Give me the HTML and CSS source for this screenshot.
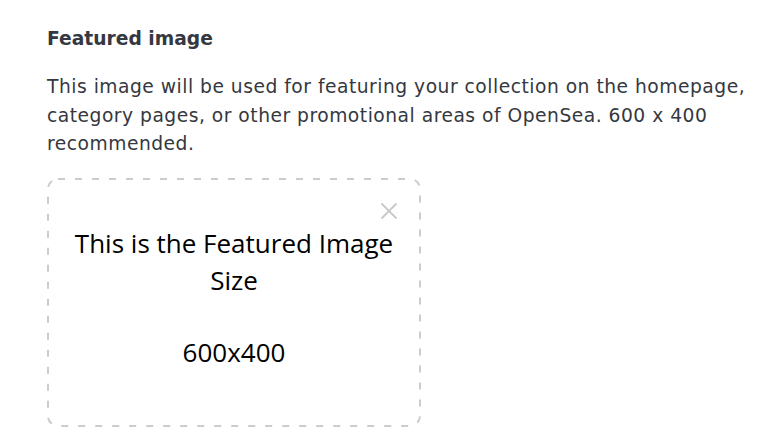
FILE: index.html
```html
<!DOCTYPE html>
<html>
<head>
<meta charset="utf-8">
<link rel="stylesheet" href="styles.css">
</head>
<body>
<section class="field">
  <h3 class="label">Featured image</h3>
  <p class="desc">This image will be used for featuring your collection on the homepage, category pages, or other promotional areas of OpenSea. 600 x 400 recommended.</p>
  <div class="drop">
    <svg class="dash" width="374" height="249" viewBox="0 0 374 249" aria-hidden="true"><rect x="1" y="1" width="372" height="247" rx="10" ry="10" fill="none" stroke="#cccccc" stroke-width="2" stroke-dasharray="7 10"/></svg>
    <div class="preview">
      <p class="line">This is the Featured Image</p>
      <p class="line">Size</p>
      <p class="line gap">600x400</p>
    </div>
    <button class="close" aria-label="Remove">
      <svg width="20" height="20" viewBox="0 0 20 20"><path d="M2.5 2.5 L17.5 17.5 M17.5 2.5 L2.5 17.5" stroke="#c8c8c8" stroke-width="1.8" fill="none"/></svg>
    </button>
  </div>
</section>
</body>
</html>
```
FILE: styles.css
```css
html, body { margin: 0; padding: 0; background: #fff; }
body { font-family: "DejaVu Sans", sans-serif; color: #353840; }
.field { padding: 27px 0 0 47px; }
.label { margin: 0; font-size: 18.7px; font-weight: 600; line-height: 24px; }
.desc { margin: 22px 0 0; font-size: 18.7px; line-height: 28.6px; font-weight: 400; width: 730px; letter-spacing: 0.5px; }
.drop {
  position: relative;
  margin-top: 19px;
  width: 374px;
  height: 249px;
  display: flex;
  justify-content: center;
}
.dash { position: absolute; left: 0; top: 0; }
.preview { padding-top: 47px; text-align: center; font-family: "Open Sans", sans-serif; color: #000; }
.line { margin: 0; font-size: 26px; line-height: 37px; }
.gap { margin-top: 35px; }
.close { position: absolute; top: 23px; right: 22px; border: 0; background: none; padding: 0; width: 20px; height: 20px; }
.close svg { display: block; }
```
